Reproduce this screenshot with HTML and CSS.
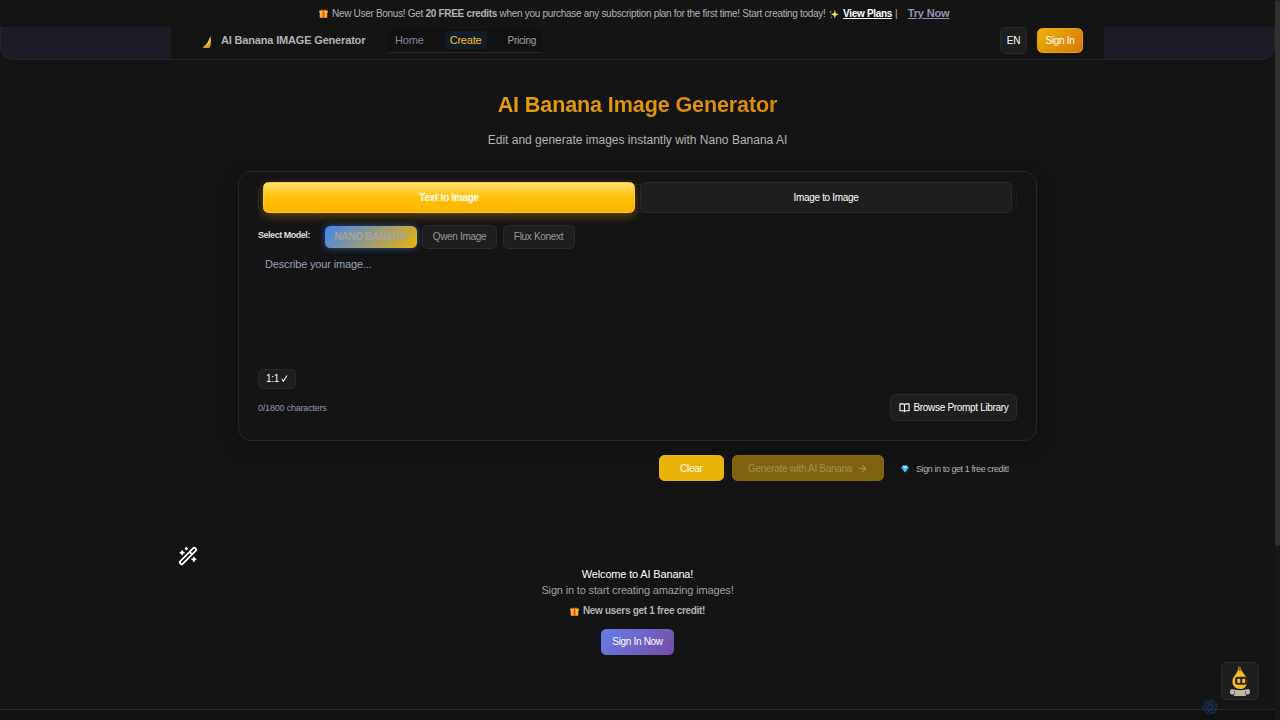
FILE: index.html
```html
<!DOCTYPE html>
<html lang="en">

<head>
    <meta charset="UTF-8">
    <title>AI Banana Image Generator</title>
    <meta name="viewport" content="width=device-width, initial-scale=1.0">
    <link rel="stylesheet" href="styles.css">
</head>

<body>
    <svg class="sprite" width="0" height="0">
        <symbol id="gift" viewBox="0 0 10 10">
            <rect x="0.8" y="2.6" width="8.4" height="7.2" rx="0.5" fill="#ffb02e" />
            <rect x="0.3" y="1.6" width="9.4" height="2.4" rx="0.4" fill="#ffc530" />
            <rect x="4" y="2" width="2" height="7.8" fill="#f0501f" />
            <path d="M5 2.2C3.6 2.2 2 1.8 2.4 0.8 2.9 0 4.6 0.6 5 2.2 5.4 0.6 7.1 0 7.6 0.8 8 1.8 6.4 2.2 5 2.2z" fill="#f4612d" />
        </symbol>
    </svg>

    <div class="banner">
        <svg class="gift"><use href="#gift" /></svg>
        <span class="banner-text">New User Bonus! Get <strong>20 FREE credits</strong> when you purchase any subscription plan for the first time! Start creating today!</span>
        <svg class="sparkle" viewBox="0 0 10 10">
            <path d="M5.8 1L6.8 4.2 9.8 5.3 6.8 6.4 5.8 9.6 4.8 6.4 1.9 5.3 4.8 4.2z" fill="#fce53f" />
            <path d="M1.6 1.4l.4 1.1 1.1.4-1.1.4-.4 1.1-.4-1.1L.1 2.9l1.1-.4z" fill="#52c3a6" />
            <path d="M2.4 7l.3.9.9.3-.9.3-.3.9-.3-.9-.9-.3.9-.3z" fill="#f58a4b" />
        </svg>
        <a class="view-plans" href="#">View Plans</a>
        <span class="divider">|</span>
        <a class="try-now" href="#">Try Now</a>
    </div>

    <header class="header">
        <div class="header-inner">
            <a class="brand" href="#">
                <svg class="brand-icon" viewBox="0 0 10 14">
                    <path d="M8.4 1C9.2 5 8.9 9.6 7.6 12.2 5.5 13 2.3 12.9.8 12.2 4.6 10 6.8 6 8.4 1z" fill="#ffd24a" />
                    <path d="M8.5 3.5C8.3 7 6.4 10.9 1 12.2c1.8.8 5.2.6 6.6 0C8.5 9.6 8.9 6 8.5 3.5z" fill="#dc9d1c" />
                </svg>
                AI Banana IMAGE Generator
            </a>
            <nav class="nav">
                <a class="nav-link" href="#">Home</a>
                <a class="nav-link active" href="#">Create</a>
                <a class="nav-link small" href="#">Pricing</a>
            </nav>
            <div class="header-actions">
                <button class="lang-button">EN</button>
                <button class="signin-button">Sign In</button>
            </div>
        </div>
    </header>

    <main class="main">
        <h1 class="title">AI Banana Image Generator</h1>
        <p class="subtitle">Edit and generate images instantly with Nano Banana AI</p>

        <section class="card">
            <div class="tabs">
                <button class="tab active">Text to Image</button>
                <button class="tab">Image to Image</button>
            </div>
            <div class="models">
                <span class="models-label">Select Model:</span>
                <button class="model active">NANO BANANA</button>
                <button class="model">Qwen Image</button>
                <button class="model">Flux Konext</button>
            </div>
            <textarea class="prompt" placeholder="Describe your image..."></textarea>
            <button class="ratio">1:1
                <svg viewBox="0 0 8 9"><path d="M1 5.2l1.7 2.6L6.8 1" /></svg>
            </button>
            <div class="card-footer">
                <span class="counter">0/1800 characters</span>
                <button class="library-button">
                    <svg viewBox="0 0 24 24"><path d="M12 6v15M2 4h7a3 3 0 0 1 3 3 3 3 0 0 1 3-3h7v15h-7a3 3 0 0 0-3 2 3 3 0 0 0-3-2H2z" /></svg>
                    Browse Prompt Library
                </button>
            </div>
        </section>

        <div class="actions">
            <button class="clear-button">Clear</button>
            <button class="generate-button">Generate with AI Banana
                <svg viewBox="0 0 24 24"><path d="M5 12h14M12 5l7 7-7 7" /></svg>
            </button>
            <span class="credit-note">
                <svg viewBox="0 0 10 10">
                    <path d="M2 1h6l1.8 2.7L5 9.5.2 3.7z" fill="#26b4e8" />
                    <path d="M2 1h6L6.8 3.7H3.2z" fill="#9be8fb" />
                    <path d="M3.2 3.7h3.6L5 9.5z" fill="#55d2f5" />
                </svg>
                Sign in to get 1 free credit!
            </span>
        </div>
    </main>

    <section class="welcome">
        <svg class="wand" viewBox="0 0 24 24">
            <path d="M21.64 3.64l-1.28-1.28a1.21 1.21 0 0 0-1.72 0L2.36 18.64a1.21 1.21 0 0 0 0 1.72l1.28 1.28a1.2 1.2 0 0 0 1.72 0L21.64 5.36a1.2 1.2 0 0 0 0-1.72M14 7l3 3M5 6v4M19 14v4M10 2v2M7 8H3M21 16h-4M11 3H9" />
        </svg>
        <h2>Welcome to AI Banana!</h2>
        <p>Sign in to start creating amazing images!</p>
        <div class="bonus"><svg class="gift"><use href="#gift" /></svg>New users get 1 free credit!</div>
        <button class="signin-now">Sign In Now</button>
    </section>

    <footer class="footer"></footer>

    <button class="chat-button" aria-label="Chat">
        <svg viewBox="0 0 24 32">
            <path d="M10.2 1.5l2.2.7c0 4 5.6 7 6.6 12.5C20 20.5 16.6 24 12 24S3.6 20.4 4.6 15C5.6 10.5 10.8 7.5 10.2 1.5z" fill="#f5bd2a" />
            <path d="M10.2 1.5l2.2.7c0 1.5.2 2.5.6 3.5l-2 .6c-.6-1.3-.8-3-.8-4.8z" fill="#8c6418" />
            <rect x="7" y="11.8" width="12.5" height="8" rx="2.5" fill="#33291a" />
            <rect x="9.3" y="13.7" width="3" height="4.2" rx="1" fill="#f2b92a" />
            <rect x="14.2" y="13.7" width="3" height="4.2" rx="1" fill="#f2b92a" />
            <path d="M4 24c4 1.5 12 1.5 16 0 2.5.5 3 5 0 5.5h-2V31H6v-1.5H4C1 29 1.5 24.5 4 24z" fill="#bdb6ad" />
            <path d="M6.5 26v4M17.5 26v4" stroke="#77716a" />
        </svg>
    </button>

    <div class="watermark">
        <svg viewBox="0 0 24 24">
            <g id="loop"><path d="M12 2c3-1.5 6.5.5 6.5 4v6L12 15.5" /></g>
            <use href="#loop" transform="rotate(60 12 12)" />
            <use href="#loop" transform="rotate(120 12 12)" />
            <use href="#loop" transform="rotate(180 12 12)" />
            <use href="#loop" transform="rotate(240 12 12)" />
            <use href="#loop" transform="rotate(300 12 12)" />
        </svg>
        ToolMage
    </div>

    <div class="scrollbar"><div class="scrollbar-thumb"></div></div>
</body>

</html>
```
FILE: styles.css
```css
* {
    box-sizing: border-box;
}

html,
body {
    margin: 0;
    height: 100%;
    overflow: hidden;
}

body {
    display: flex;
    flex-direction: column;
    padding-right: 5px;
    background: #141414;
    color: #b3b3b3;
    font-family: "Liberation Sans", Arial, sans-serif;
    font-size: 10px;
    letter-spacing: -0.3px;
}

button {
    display: flex;
    align-items: center;
    justify-content: center;
    padding: 0;
    border: 1px solid #2b2b2b;
    border-radius: 5.33px;
    background: #1e1e1e;
    color: #fff;
    font-family: inherit;
    font-size: 10px;
    letter-spacing: -0.32px;
    cursor: pointer;
}

a {
    color: inherit;
    text-decoration: none;
}

.sprite {
    position: absolute;
}

.gift {
    width: 9px;
    height: 9px;
}

/* Promo banner */
.banner {
    display: flex;
    align-items: center;
    height: 27px;
    padding: 0 0 1px 319px;
    white-space: nowrap;
}

.banner-text {
    margin-left: 4px;
    width: 493px;
}

.sparkle {
    width: 10px;
    height: 10px;
    margin: 1px 4px 0 4px;
}

.view-plans {
    width: 49px;
    color: #fff;
    font-weight: bold;
    text-decoration: underline;
}

.divider {
    margin-left: 3px;
}

.try-now {
    margin-left: 10.5px;
    color: #9292b5;
    font-size: 11px;
    font-weight: bold;
    letter-spacing: -0.18px;
    text-decoration: underline;
}

/* Header */
.header {
    height: 33px;
    border: 1px solid #25252f;
    border-top: none;
    border-radius: 0 0 13px 13px;
    background: #1c1c27;
}

.header-inner {
    display: flex;
    align-items: center;
    width: 933px;
    height: 32px;
    margin: 0 auto;
    padding: 0 21px 5px 31px;
    background: #141414;
}

.brand {
    display: flex;
    align-items: center;
    width: 187px;
    padding-bottom: 1px;
    font-size: 11px;
    font-weight: bold;
    letter-spacing: -0.17px;
    white-space: nowrap;
}

.brand-icon {
    width: 10px;
    height: 14px;
    margin: 3px 9px 0 0;
}

.nav {
    display: flex;
    align-items: center;
    width: 153px;
    height: 24px;
    padding: 0 6px;
    border-bottom: 1px solid #2b2b2b;
    background: #111;
}

.nav-link {
    color: #8585a8;
    font-size: 11px;
    letter-spacing: -0.18px;
}

.nav-link.active {
    margin: 0 21px;
    padding: 3px 5px;
    border-radius: 3px;
    background: #121c26;
    color: #fbbf24;
}

.nav-link.small {
    color: #a3a3a3;
    font-size: 10px;
    letter-spacing: -0.3px;
}

.header-actions {
    display: flex;
    align-items: center;
    gap: 10px;
    margin-left: auto;
}

.lang-button {
    width: 27px;
    height: 27px;
}

.signin-button {
    width: 46px;
    height: 25px;
    border-color: #e9a50d;
    background: linear-gradient(135deg, #eab308, #d97706);
}

/* Generator */
.main {
    width: 799px;
    margin: 0 auto;
    padding-top: 32px;
}

.title {
    margin: 0;
    background: linear-gradient(135deg, #eab308, #d97706);
    background-clip: text;
    -webkit-background-clip: text;
    color: transparent;
    font-size: 21.6px;
    letter-spacing: -0.14px;
    line-height: 26px;
    text-align: center;
}

.subtitle {
    margin: 14px 0 22px;
    font-size: 12px;
    letter-spacing: 0;
    line-height: 17px;
    text-align: center;
}

.card {
    height: 270px;
    padding: 10px 19px;
    border: 1px solid #26262e;
    border-radius: 13px;
    box-shadow: 0 5px 22px rgba(0, 0, 0, 0.3);
}

.tabs {
    display: flex;
    align-items: center;
    gap: 5px;
    height: 28px;
    margin-top: 2px;
    padding: 0 4px;
    border: 1px solid #1e1e1e;
    border-radius: 8px;
}

.tab {
    flex: 1;
    height: 31px;
    margin-top: -1px;
}

.tab.active {
    border-color: #ffc830;
    background: linear-gradient(180deg, #ffdf70 0%, #ffc107 50%, #ffb300 100%);
    box-shadow: 0 3px 10px rgba(255, 193, 7, 0.3);
    font-weight: bold;
}

.models {
    display: flex;
    align-items: center;
    gap: 5.5px;
    height: 24px;
    margin-top: 13px;
}

.models-label {
    width: 61px;
    padding-bottom: 4px;
    color: #ddd;
    font-size: 9px;
    font-weight: bold;
    letter-spacing: -0.47px;
}

.model {
    width: 75px;
    height: 24px;
    padding-bottom: 1px;
    color: #9a9a9a;
}

.model:last-child {
    width: 72px;
}

.model.active {
    width: 92px;
    height: 22px;
    border: none;
    background: linear-gradient(135deg, #4285f4, #eab308);
    box-shadow: 0 0 6px rgba(66, 133, 244, 0.6);
    color: #a8a59c;
    font-weight: bold;
}

.prompt {
    display: block;
    width: 100%;
    height: 116px;
    margin-top: 5px;
    padding: 4px 7px;
    border: none;
    outline: none;
    resize: none;
    background: transparent;
    color: #fff;
    font-family: inherit;
    font-size: 11px;
    letter-spacing: -0.16px;
}

.prompt::placeholder {
    color: #94a3b8;
}

.ratio {
    width: 38px;
    height: 20px;
    margin-top: -1px;
    padding-bottom: 1px;
}

.ratio svg {
    width: 7px;
    height: 9px;
    margin-left: 2px;
    fill: none;
    stroke: #fff;
    stroke-width: 1.2;
}

.card-footer {
    display: flex;
    align-items: center;
    justify-content: space-between;
    margin-top: 5px;
}

.counter {
    color: #8b9bb0;
    font-size: 9px;
    letter-spacing: -0.2px;
}

.library-button {
    gap: 4px;
    width: 127px;
    height: 27px;
}

.library-button svg,
.generate-button svg {
    width: 11px;
    height: 11px;
    fill: none;
    stroke: currentColor;
    stroke-width: 2.4;
    stroke-linejoin: round;
    stroke-linecap: round;
}

.actions {
    display: flex;
    align-items: center;
    justify-content: flex-end;
    gap: 8px;
    margin-top: 14px;
    padding-right: 27px;
}

.clear-button {
    width: 65.5px;
    height: 26px;
    border-color: #eab308;
    background: #eab308;
}

.generate-button {
    gap: 5px;
    width: 152px;
    height: 26px;
    border-color: #83670f;
    background: #7f630e;
    color: #a28e55;
}

.credit-note {
    display: flex;
    align-items: center;
    width: 109px;
    margin-left: 9px;
    padding-top: 1px;
    font-size: 9px;
    letter-spacing: -0.42px;
    white-space: nowrap;
}

.credit-note svg {
    width: 8px;
    height: 8px;
    margin-right: 7px;
}

/* Signed-out state */
.welcome {
    display: flex;
    flex-direction: column;
    align-items: center;
    width: 933px;
    height: 228px;
    margin: 0 auto;
    padding: 65px 7px 0;
}

.wand {
    align-self: flex-start;
    width: 20px;
    height: 20px;
    fill: none;
    stroke: #fff;
    stroke-width: 2.1;
    stroke-linecap: round;
    stroke-linejoin: round;
}

.welcome h2,
.welcome p {
    margin: 0;
    font-size: 11px;
    font-weight: normal;
    letter-spacing: -0.16px;
    line-height: 16px;
}

.welcome h2 {
    color: #fff;
}

.welcome p {
    color: #a0a0a0;
}

.bonus {
    display: flex;
    align-items: center;
    gap: 4px;
    margin: 7px 0 12px;
    font-weight: bold;
    line-height: 12px;
}

.signin-now {
    width: 73px;
    height: 26px;
    padding-bottom: 1px;
    border: none;
    background: linear-gradient(135deg, #667eea, #764ba2);
}

.footer {
    flex: 1;
    border-top: 1px solid #292929;
    background: #111;
}

/* Floating elements */
.chat-button {
    position: fixed;
    right: 21px;
    bottom: 20px;
    width: 38px;
    height: 38px;
}

.chat-button svg {
    width: 24px;
    height: 32px;
}

.watermark {
    position: fixed;
    left: 1202px;
    top: 699px;
    display: flex;
    align-items: center;
    gap: 5px;
    color: #1b1919;
    font-size: 11px;
    font-weight: bold;
}

.watermark svg {
    width: 16px;
    height: 16px;
    fill: none;
    stroke: #17365f;
    stroke-width: 1.7;
}

.scrollbar {
    position: fixed;
    top: 0;
    right: 0;
    width: 5px;
    height: 100%;
    background: #171717;
}

.scrollbar-thumb {
    height: 546px;
    border-radius: 3px;
    background: #303030;
}
```
